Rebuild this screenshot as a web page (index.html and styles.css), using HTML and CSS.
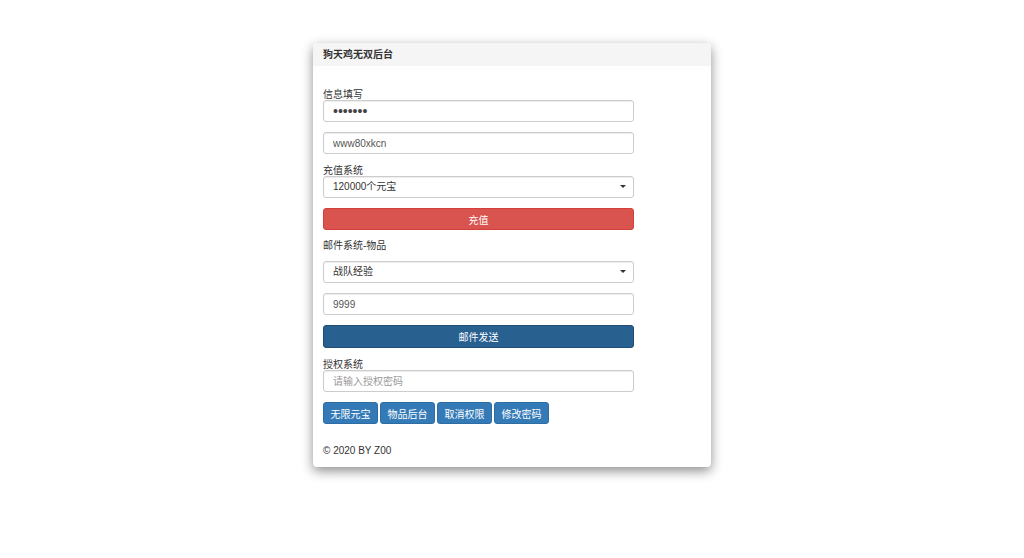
FILE: index.html
```html
<!DOCTYPE html>
<html lang="zh">
<head>
<meta charset="utf-8">
<title>狗天鸡无双后台</title>
<link rel="stylesheet" href="styles.css">
</head>
<body>
<div class="card">
  <div class="card-head">狗天鸡无双后台</div>
  <div class="card-body">
    <div class="group">
      <label class="lbl">信息填写</label>
      <input class="field pwd" type="password" value="1234567">
    </div>
    <div class="group">
      <input class="field" type="text" value="www80xkcn">
    </div>
    <div class="group">
      <label class="lbl">充值系统</label>
      <div class="select-wrap">
        <div class="field select">120000个元宝</div>
        <span class="caret"></span>
      </div>
    </div>
    <button class="btn-block btn-red">充值</button>
    <p class="section">邮件系统-物品</p>
    <div class="group">
      <div class="select-wrap">
        <div class="field select">战队经验</div>
        <span class="caret"></span>
      </div>
    </div>
    <div class="group">
      <input class="field" type="text" value="9999">
    </div>
    <button class="btn-block btn-navy">邮件发送</button>
    <div class="group">
      <label class="lbl">授权系统</label>
      <input class="field" type="text" placeholder="请输入授权密码">
    </div>
    <div class="btn-row">
      <button class="btn-sm">无限元宝</button>
      <button class="btn-sm">物品后台</button>
      <button class="btn-sm">取消权限</button>
      <button class="btn-sm">修改密码</button>
    </div>
    <div class="footer">© 2020 BY Z00</div>
  </div>
</div>
</body>
</html>
```
FILE: styles.css
```css
html, body {
  margin: 0;
  padding: 0;
  background: #ffffff;
}
body {
  font-family: "Liberation Sans", "Noto Sans CJK SC", sans-serif;
  font-size: 10px;
  color: #333333;
  padding-bottom: 40px;
}
.card {
  width: 398px;
  margin: 43px auto 0;
  background: #ffffff;
  border-radius: 4px;
  box-shadow: 0 4px 12px rgba(0, 0, 0, 0.45);
}
.card-head {
  height: 23px;
  line-height: 23px;
  padding: 0 10px;
  background: #f5f5f5;
  border-radius: 4px 4px 0 0;
  font-weight: bold;
  font-size: 10px;
  color: #333333;
}
.card-body {
  padding: 22px 10px 10px;
}
.group {
  width: 311px;
  margin-bottom: 10px;
}
.lbl {
  display: block;
  height: 10px;
  padding-top: 2px;
  line-height: 10px;
  font-size: 10px;
  color: #333333;
}
.field {
  display: block;
  box-sizing: border-box;
  width: 311px;
  height: 22px;
  margin: 0;
  padding: 0 9px;
  border: 1px solid #cccccc;
  border-radius: 3px;
  background: #ffffff;
  font-family: "Liberation Sans", "Noto Sans CJK SC", sans-serif;
  font-size: 10px;
  color: #555555;
  box-shadow: inset 0 1px 1px rgba(0, 0, 0, 0.075);
  outline: none;
}
.pwd {
  font-size: 14px;
  color: #444444;
}
.field::placeholder {
  color: #999999;
}
.select {
  line-height: 20px;
  color: #333333;
}
.select-wrap {
  position: relative;
}
.caret {
  position: absolute;
  right: 8px;
  top: 9px;
  width: 0;
  height: 0;
  border-left: 3px solid transparent;
  border-right: 3px solid transparent;
  border-top: 3px solid #333333;
}
.btn-block {
  display: block;
  box-sizing: border-box;
  width: 311px;
  height: 22px;
  margin: 0 0 10px;
  padding: 0;
  border: 1px solid transparent;
  border-radius: 3px;
  font-family: "Liberation Sans", "Noto Sans CJK SC", sans-serif;
  font-size: 10px;
  color: #ffffff;
  cursor: pointer;
}
.btn-red {
  background: #d9534f;
  border-color: #d43f3a;
}
.btn-navy {
  height: 23px;
  background: #286090;
  border-color: #204d74;
}
.section {
  margin: 0 0 9px;
  line-height: 12px;
  font-size: 10px;
  color: #333333;
}
.btn-row {
  display: flex;
  gap: 2px;
}
.btn-sm {
  box-sizing: border-box;
  width: 55px;
  height: 22px;
  padding: 0;
  border: 1px solid #2e6da4;
  border-radius: 3px;
  background: #337ab7;
  color: #ffffff;
  font-family: "Liberation Sans", "Noto Sans CJK SC", sans-serif;
  font-size: 10px;
  cursor: pointer;
}
.footer {
  margin-top: 21px;
  line-height: 12px;
  font-size: 10px;
  color: #333333;
}
```
